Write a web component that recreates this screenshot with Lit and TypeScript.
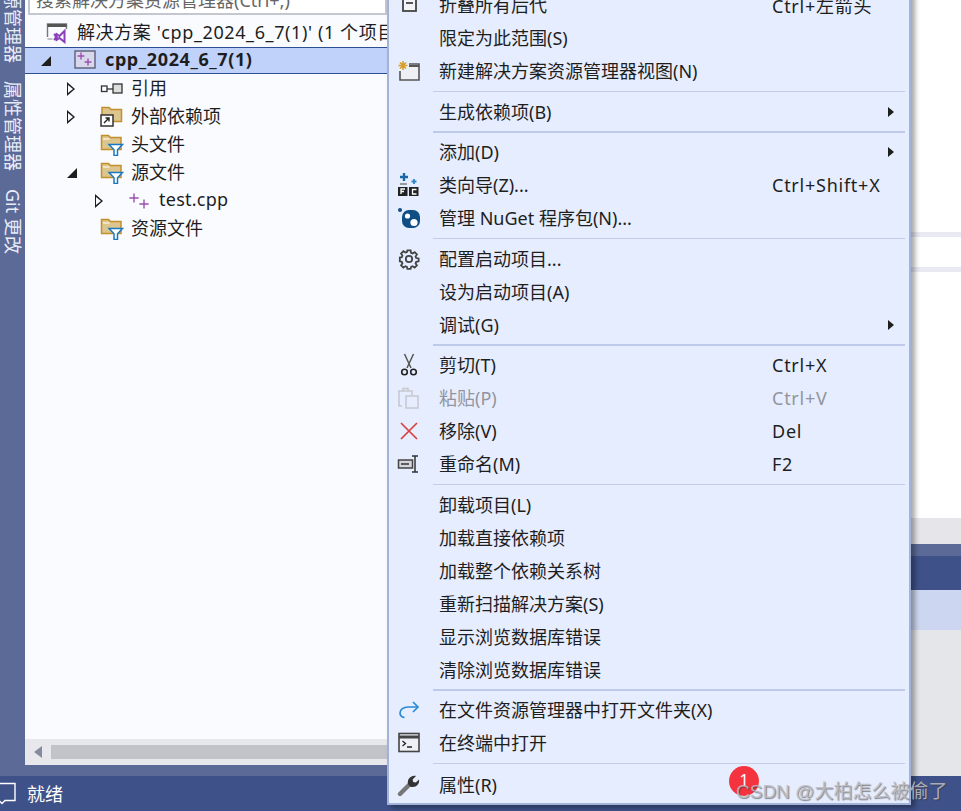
import { LitElement, html, css, svg, nothing } from "lit";
import { customElement } from "lit/decorators.js";

const ic = (w: number, h: number, body: unknown) =>
  html`<svg width=${w} height=${h} viewBox="0 0 ${w} ${h}" fill="none">${body}</svg>`;

const plus = (x: number, y: number, r: number, c = "#9b4fb0") =>
  svg`<path d="M${x - r} ${y}H${x + r}M${x} ${y - r}V${y + r}" stroke=${c} stroke-width="1.4"/>`;

const folderFilter = ic(24, 22, svg`
  <path d="M1.5 1.5h7l2 2h10.5v12H1.5z" fill="#dcc68e" stroke="#c28f2a" stroke-width="1.5"/>
  <path d="M3 5h6.5" stroke="#f8eed4" stroke-width="1.5"/>
  <path d="M9 10.5h13.5l-5 5.2V21.5h-3.5v-5.8z" fill="#fff" stroke="#1a78c2" stroke-width="1.5"/>`);

const treeIcons: Record<string, unknown> = {
  solution: ic(22, 22, svg`
    <path d="M1.5 15V2h19v5" stroke="#777" stroke-width="1.4"/><path d="M1.5 3.5h19" stroke="#555" stroke-width="3"/>
    <path d="M1.5 17h5" stroke="#aaa" stroke-width="1.4"/>
    <path d="M8 12l3 3-3 3M18.5 9v11l-5-4-3 2-1-3 1-3 3 2z" stroke="#8a3fb8" stroke-width="2" fill="#fff"/>`),
  project: ic(22, 22, svg`
    <rect x="1" y="1" width="20" height="17" fill="#d8d8ec" stroke="#5d5f78" stroke-width="1.4"/>
    ${plus(7, 6, 3.4)}${plus(14, 12, 3.4)}`),
  ref: ic(24, 14, svg`
    <rect x="1.5" y="4" width="5.5" height="5.5" fill="#fff" stroke="#333" stroke-width="1.3"/>
    <path d="M7 7h6" stroke="#333" stroke-width="1.3"/>
    <rect x="13" y="2" width="9" height="9" fill="#ddd" stroke="#333" stroke-width="1.3"/>`),
  ext: ic(24, 22, svg`
    <path d="M2 1.5h7l2 2h10.5v12H2z" fill="#dcc68e" stroke="#c28f2a" stroke-width="1.5"/>
    <rect x="1" y="9" width="12" height="11" fill="#fff" stroke="#333" stroke-width="1.5"/>
    <path d="M4 17l5-5M5.5 12H9v3.5" stroke="#222" stroke-width="1.4"/>`),
  filter: folderFilter,
  cpp: ic(24, 18, svg`${plus(6, 6, 4.6)}${plus(16, 12, 4.6)}`),
};

const menuIcons: Record<string, unknown> = {
  collapse: ic(22, 22, svg`<rect x="5" y="2" width="13" height="15" fill="#f4f4f8" stroke="#444" stroke-width="1.8"/><path d="M8 9h7" stroke="#444" stroke-width="1.8"/>`),
  newview: ic(24, 22, svg`
    <path d="M12 4h10v16H3v-9" fill="#eef0f6" stroke="#555" stroke-width="1.6"/><path d="M12 6h10" stroke="#555" stroke-width="2"/>
    <path d="M6 1v9M1.5 5.5h9M3 2.5l6 6M9 2.5l-6 6" stroke="#d6a02a" stroke-width="1.6"/>`),
  wizard: ic(24, 26, svg`
    <path d="M7 1v8M3 5h8" stroke="#1668a8" stroke-width="2.4"/><path d="M17 7v5M14.5 9.5h5" stroke="#2e86c8" stroke-width="1.8"/>
    <path d="M3 12h7" stroke="#999" stroke-width="2"/>
    <rect x="1" y="15" width="9.5" height="9" fill="#222"/><rect x="12" y="15" width="9.5" height="9" fill="#222"/>
    <path d="M4 22v-5h4M4 19.5h3M19.5 17.5h-4v4.5h4" stroke="#fff" stroke-width="1.3"/>`),
  nuget: ic(24, 22, svg`
    <circle cx="3" cy="3" r="2" fill="#0f4d85"/><rect x="5" y="3" width="18" height="18" rx="7" fill="#0f4d85"/>
    <circle cx="10.5" cy="9" r="2.6" fill="#fff"/><circle cx="17" cy="15.5" r="3.6" fill="#fff"/>`),
  gear: ic(22, 22, svg`
    <circle cx="11" cy="11" r="3.2" stroke="#444" stroke-width="1.8"/>
    <path d="M9.2 1.5h3.6l.5 2.7 1.7.7 2.3-1.5 2.5 2.5-1.5 2.3.7 1.7 2.7.5v3.2l-2.7.5-.7 1.7 1.5 2.3-2.5 2.5-2.3-1.5-1.7.7-.5 2.2H9.2l-.5-2.2-1.7-.7-2.3 1.5-2.5-2.5 1.5-2.3-.7-1.7-2.2-.5V9.4l2.2-.5.7-1.7-1.5-2.3 2.5-2.5L7 3.9l1.7-.7z" stroke="#444" stroke-width="2" transform="translate(1.1 1.1) scale(.9)"/>`),
  cut: ic(20, 24, svg`
    <path d="M5.5 1L12 15M14.5 1L8 15" stroke="#555" stroke-width="1.5"/>
    <circle cx="5.5" cy="19" r="2.8" stroke="#222" stroke-width="1.6"/><circle cx="14.5" cy="19" r="2.8" stroke="#222" stroke-width="1.6"/>`),
  paste: ic(24, 24, svg`
    <path d="M5 20H2V5h13v4M6 5V2.5h5V5" stroke="#c6c8d0" stroke-width="1.5"/>
    <rect x="9" y="10" width="12" height="12" stroke="#c6c8d0" stroke-width="1.5"/>`),
  remove: ic(22, 22, svg`<path d="M3 3l16 16M19 3L3 19" stroke="#d9403c" stroke-width="1.7"/>`),
  rename: ic(24, 22, svg`
    <rect x="1.5" y="7" width="14" height="8" fill="#d4d5da" stroke="#444" stroke-width="1.5"/><path d="M4 11h8" stroke="#333" stroke-width="1.5"/>
    <path d="M15 3h6M15 19h6M18 3v16" stroke="#333" stroke-width="1.5"/>`),
  open: ic(22, 20, svg`
    <path d="M20 7H10C5.5 7 2 9.5 2 13c0 2.5 1.5 4 4.5 4.5" stroke="#2a8ad4" stroke-width="1.7"/>
    <path d="M15 2l5 5-5 5" stroke="#2a8ad4" stroke-width="1.7"/>`),
  terminal: ic(22, 22, svg`
    <rect x="1" y="1.5" width="20" height="18" fill="#eef0f6" stroke="#444" stroke-width="1.6"/><path d="M1 5h20" stroke="#444" stroke-width="3"/>
    <path d="M4.5 9l3 2.5-3 2.5M9 15h5" stroke="#222" stroke-width="1.3"/>`),
  wrench: ic(24, 24, svg`
    <path d="M3 21L13 11" stroke="#777" stroke-width="4.4" stroke-linecap="round"/>
    <path d="M11 11c-1-5 3-9 8-8l-3.4 3.4.6 2.6 2.6.6L22 6.5c1 5-4 9-9 7z" fill="#333"/>`),
};

type Row = {
  label?: string;
  icon?: string;
  key?: string;
  sub?: boolean;
  off?: boolean;
  gap?: number;
  thick?: boolean;
};

const menu: Row[] = [
  { label: "折叠所有后代", icon: "collapse", key: "Ctrl+左箭头" },
  { label: "限定为此范围(S)" },
  { label: "新建解决方案资源管理器视图(N)", icon: "newview" },
  { gap: 8 },
  { label: "生成依赖项(B)", sub: true },
  { gap: 7, thick: true },
  { label: "添加(D)", sub: true },
  { label: "类向导(Z)...", icon: "wizard", key: "Ctrl+Shift+X" },
  { label: "管理 NuGet 程序包(N)...", icon: "nuget" },
  { gap: 8 },
  { label: "配置启动项目...", icon: "gear" },
  { label: "设为启动项目(A)" },
  { label: "调试(G)", sub: true },
  { gap: 7, thick: true },
  { label: "剪切(T)", icon: "cut", key: "Ctrl+X" },
  { label: "粘贴(P)", icon: "paste", key: "Ctrl+V", off: true },
  { label: "移除(V)", icon: "remove", key: "Del" },
  { label: "重命名(M)", icon: "rename", key: "F2" },
  { gap: 8 },
  { label: "卸载项目(L)" },
  { label: "加载直接依赖项" },
  { label: "加载整个依赖关系树" },
  { label: "重新扫描解决方案(S)" },
  { label: "显示浏览数据库错误" },
  { label: "清除浏览数据库错误" },
  { gap: 7, thick: true },
  { label: "在文件资源管理器中打开文件夹(X)", icon: "open" },
  { label: "在终端中打开", icon: "terminal" },
  { gap: 9 },
  { label: "属性(R)", icon: "wrench" },
];

type Node = { label: string; pad: number; icon: string; arrow?: "open" | "closed"; sel?: boolean; noArrow?: boolean; wide?: boolean; slight?: boolean };

const tree: Node[] = [
  { label: "解决方案 'cpp_2024_6_7(1)' (1 个项目", pad: 21, icon: "solution", noArrow: true, wide: true },
  { label: "cpp_2024_6_7(1)", pad: 13, icon: "project", arrow: "open", sel: true, wide: true },
  { label: "引用", pad: 39, icon: "ref", arrow: "closed" },
  { label: "外部依赖项", pad: 39, icon: "ext", arrow: "closed" },
  { label: "头文件", pad: 39, icon: "filter" },
  { label: "源文件", pad: 39, icon: "filter", arrow: "open" },
  { label: "test.cpp", pad: 67, icon: "cpp", arrow: "closed", slight: true },
  { label: "资源文件", pad: 39, icon: "filter" },
];

@customElement("app-root")
export class AppRoot extends LitElement {
  static styles = css`
    :host {
      display: block;
      position: relative;
      width: 961px;
      height: 811px;
      overflow: hidden;
      font-family: "Noto Sans", "Noto Sans CJK SC", sans-serif;
      font-size: 18px;
      color: #1e1e1e;
      background: #fff;
    }
    .main { display: flex; height: 776px; background: #5c6a98; }
    .rail {
      width: 25px;
      flex: none;
      overflow: hidden;
    }
    .rail-in {
      margin-top: -9px;
      display: flex;
      flex-direction: row;
      gap: 18px;
      writing-mode: vertical-rl;
      text-orientation: sideways;
      color: #e9edf8;
      line-height: 25px;
      white-space: nowrap;
      height: 800px;
    }
    .explorer {
      width: 362px;
      flex: none;
      height: 765px;
      background: #f9fbff;
      display: flex;
      flex-direction: column;
    }
    .search {
      height: 13px;
      margin-left: 3px;
      border: 2px solid #c4c6d0;
      border-top: 0;
      background: #fff;
      overflow: hidden;
      flex: none;
      color: #666;
      line-height: 20px;
      padding-left: 6px;
      white-space: nowrap;
    }
    .search span { display: block; margin-top: -10px; }
    .tree { flex: 1; padding-top: 4px; overflow: hidden; }
    .node {
      height: 28px;
      display: flex;
      align-items: center;
      white-space: nowrap;
      box-sizing: border-box;
    }
    .node.sel {
      height: 27px;
      margin-bottom: 1px;
      background: #c0d2fa;
      border-top: 1px solid #2c4f93;
      border-bottom: 1px solid #2c4f93;
      font-weight: 700;
    }
    .lbl { display: block; margin-top: -4px; }
    .wide { letter-spacing: 0.6px; }
    .slight { letter-spacing: 0.25px; }
    .arr { width: 36px; flex: none; display: flex; align-items: center; padding-left: 3px; box-sizing: border-box; }
    .ico { width: 31px; flex: none; display: flex; align-items: center; }
    .tri-open { width: 0; height: 0; border-left: 10px solid transparent; border-bottom: 10px solid #1e1e1e; }
    .tri-closed {
      width: 0; height: 0; position: relative;
      border-top: 7px solid transparent; border-bottom: 7px solid transparent; border-left: 8px solid #1e1e1e;
    }
    .tri-closed::after {
      content: ""; position: absolute; left: -7px; top: -4px;
      border-top: 4px solid transparent; border-bottom: 4px solid transparent; border-left: 5px solid #f9fbff;
    }
    .hbar {
      height: 26px;
      flex: none;
      background: #e8e8ec;
      display: flex;
      align-items: center;
      padding-left: 9px;
      gap: 9px;
    }
    .hbar .left {
      width: 0; height: 0;
      border-top: 6px solid transparent; border-bottom: 6px solid transparent; border-right: 8px solid #868a9e;
    }
    .hbar .thumb { flex: 1; height: 14px; background: #c2c3c9; }
    .right { flex: 1; display: flex; flex-direction: column; }
    .editor { height: 518px; background: #fff; display: flex; flex-direction: column; padding-top: 232px; box-sizing: border-box; flex: none; }
    .gl { height: 5px; background: #e9e9f3; margin-bottom: 30px; }
    .gray { height: 26px; background: #e5e5ea; flex: none; }
    .band { height: 12px; flex: none; }
    .hdr { height: 34px; background: #3f5189; flex: none; }
    .selrow { height: 40px; background: #ccd6f0; flex: none; }
    .list { flex: 1; background: #e5e6ea; }
    .status {
      height: 35px;
      background: #3f5189;
      color: #fff;
      display: flex;
      align-items: center;
      padding: 0 0 2px 27px;
      box-sizing: border-box;
      position: relative;
    }
    .status svg { position: absolute; left: -4px; top: 6px; }
    .menu {
      position: absolute;
      left: 387px;
      top: -12px;
      width: 524px;
      box-sizing: border-box;
      padding-bottom: 2px;
      background: #e6edfe;
      border: 2px solid #a3b2d8;
      border-top: 0;
      box-shadow: 4px 3px 5px rgba(0, 0, 0, 0.35);
    }
    .row {
      height: 33px;
      display: grid;
      grid-template-columns: 52px 333px 1fr 21px;
      align-items: center;
      white-space: nowrap;
      margin-left: -2px;
    }
    .row.off { color: #92959f; }
    .mi { display: flex; justify-content: center; padding-right: 8px; align-items: center; }
    .txt { display: block; margin-top: -2px; }
    .kb { display: block; letter-spacing: 0.75px; }
    .sub {
      display: block;
      width: 0; height: 0;
      border-top: 5px solid transparent; border-bottom: 5px solid transparent; border-left: 6px solid #1e1e1e;
    }
    .sep { display: flex; align-items: center; margin-left: 44px; margin-right: 4px; }
    .sep i { display: block; flex: 1; height: 1px; background: #c3cde9; }
    .sep.thick i { height: 2px; background: #bfcaea; }
    .badge {
      position: absolute;
      left: 729px;
      top: 766px;
      width: 30px;
      height: 30px;
      border-radius: 50%;
      background: #f5333f;
      color: #fff;
      text-align: center;
      line-height: 28px;
      font-size: 17px;
    }
    .mark {
      position: absolute;
      left: 736px;
      top: 778px;
      font-family: "Liberation Sans", "Noto Sans CJK SC", sans-serif;
      font-size: 19px;
      line-height: 28px;
      color: rgba(190, 190, 195, 0.85);
      text-shadow: 1px 1px 1px rgba(60, 60, 60, 0.6);
      white-space: nowrap;
    }
  `;

  private renderNode(n: Node) {
    return html`<div class="node ${n.sel ? "sel" : ""}" style="padding-left:${n.pad}px">
      ${n.noArrow
        ? nothing
        : html`<span class="arr">${n.arrow ? html`<span class="tri-${n.arrow}"></span>` : nothing}</span>`}
      <span class="ico">${treeIcons[n.icon]}</span>
      <span class="lbl ${n.wide ? "wide" : ""} ${n.slight ? "slight" : ""}">${n.label}</span>
    </div>`;
  }

  private renderRow(r: Row) {
    if (!r.label) {
      return html`<div class="sep ${r.thick ? "thick" : ""}" style="height:${r.gap}px"><i></i></div>`;
    }
    return html`<div class="row ${r.off ? "off" : ""}">
      <span class="mi">${r.icon ? menuIcons[r.icon] : nothing}</span>
      <span class="txt">${r.label}</span>
      <span class="kb">${r.key ?? nothing}</span>
      <span>${r.sub ? html`<span class="sub"></span>` : nothing}</span>
    </div>`;
  }

  render() {
    return html`
      <div class="main">
        <div class="rail">
          <div class="rail-in">
            <span>源管理器</span>
            <span>属性管理器</span>
            <span>Git 更改</span>
          </div>
        </div>
        <div class="explorer">
          <div class="search"><span>搜索解决方案资源管理器(Ctrl+;)</span></div>
          <div class="tree">${tree.map((n) => this.renderNode(n))}</div>
          <div class="hbar"><span class="left"></span><span class="thumb"></span></div>
        </div>
        <div class="right">
          <div class="editor"><div class="gl"></div><div class="gl"></div></div>
          <div class="gray"></div>
          <div class="band"></div>
          <div class="hdr"></div>
          <div class="selrow"></div>
          <div class="list"></div>
        </div>
      </div>
      <div class="status">
        <svg width="20" height="24" viewBox="0 0 20 24" fill="none"><path d="M1 1.5h18v17H9l-3 3-3-3H1z" stroke="#fff" stroke-width="1.4"/></svg>
        就绪
      </div>
      <div class="menu">${menu.map((r) => this.renderRow(r))}</div>
      <div class="badge">1</div>
      <div class="mark">CSDN @大柏怎么被偷了</div>
    `;
  }
}
